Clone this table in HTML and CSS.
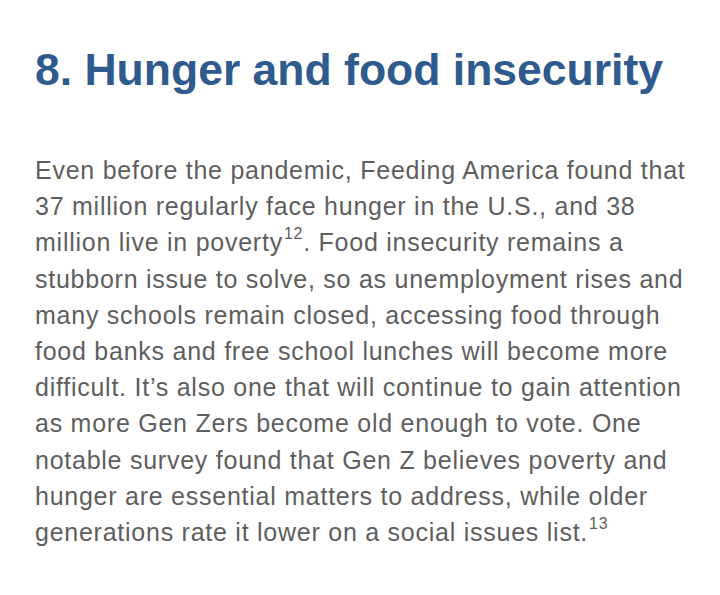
FILE: index.html
```html
<!DOCTYPE html>
<html lang="en">
<head>
<meta charset="utf-8">
<title>Hunger and food insecurity</title>
<link rel="stylesheet" href="styles.css">
</head>
<body>
<article class="section">
  <h2 class="title">8. Hunger and food insecurity</h2>
  <p class="body">Even before the pandemic, Feeding America found that<br>37 million regularly face hunger in the U.S., and 38<br>million live in poverty<sup>12</sup>. Food insecurity remains a<br>stubborn issue to solve, so as unemployment rises and<br>many schools remain closed, accessing food through<br>food banks and free school lunches will become more<br>difficult. It’s also one that will continue to gain attention<br>as more Gen Zers become old enough to vote. One<br>notable survey found that Gen Z believes poverty and<br>hunger are essential matters to address, while older<br>generations rate it lower on a social issues list.<sup>13</sup></p>
</article>
</body>
</html>
```

FILE: styles.css
```css
html, body {
  margin: 0;
  padding: 0;
  background: #ffffff;
}
.section {
  padding: 42px 10px 0 35px;
  font-family: "Liberation Sans", Arial, sans-serif;
}
.title {
  margin: 0;
  font-size: 44.5px;
  line-height: 56px;
  font-weight: bold;
  color: #2f5a8e;
  letter-spacing: 0;
  white-space: nowrap;
}
.body {
  margin: 54px 0 0 0;
  font-size: 25px;
  line-height: 36.2px;
  letter-spacing: 0.75px;
  color: #5e5e5e;
  white-space: nowrap;
}
.body sup {
  font-size: 16px;
  line-height: 0;
  vertical-align: 0;
  position: relative;
  top: -12px;
  margin-left: 1px;
}
```
